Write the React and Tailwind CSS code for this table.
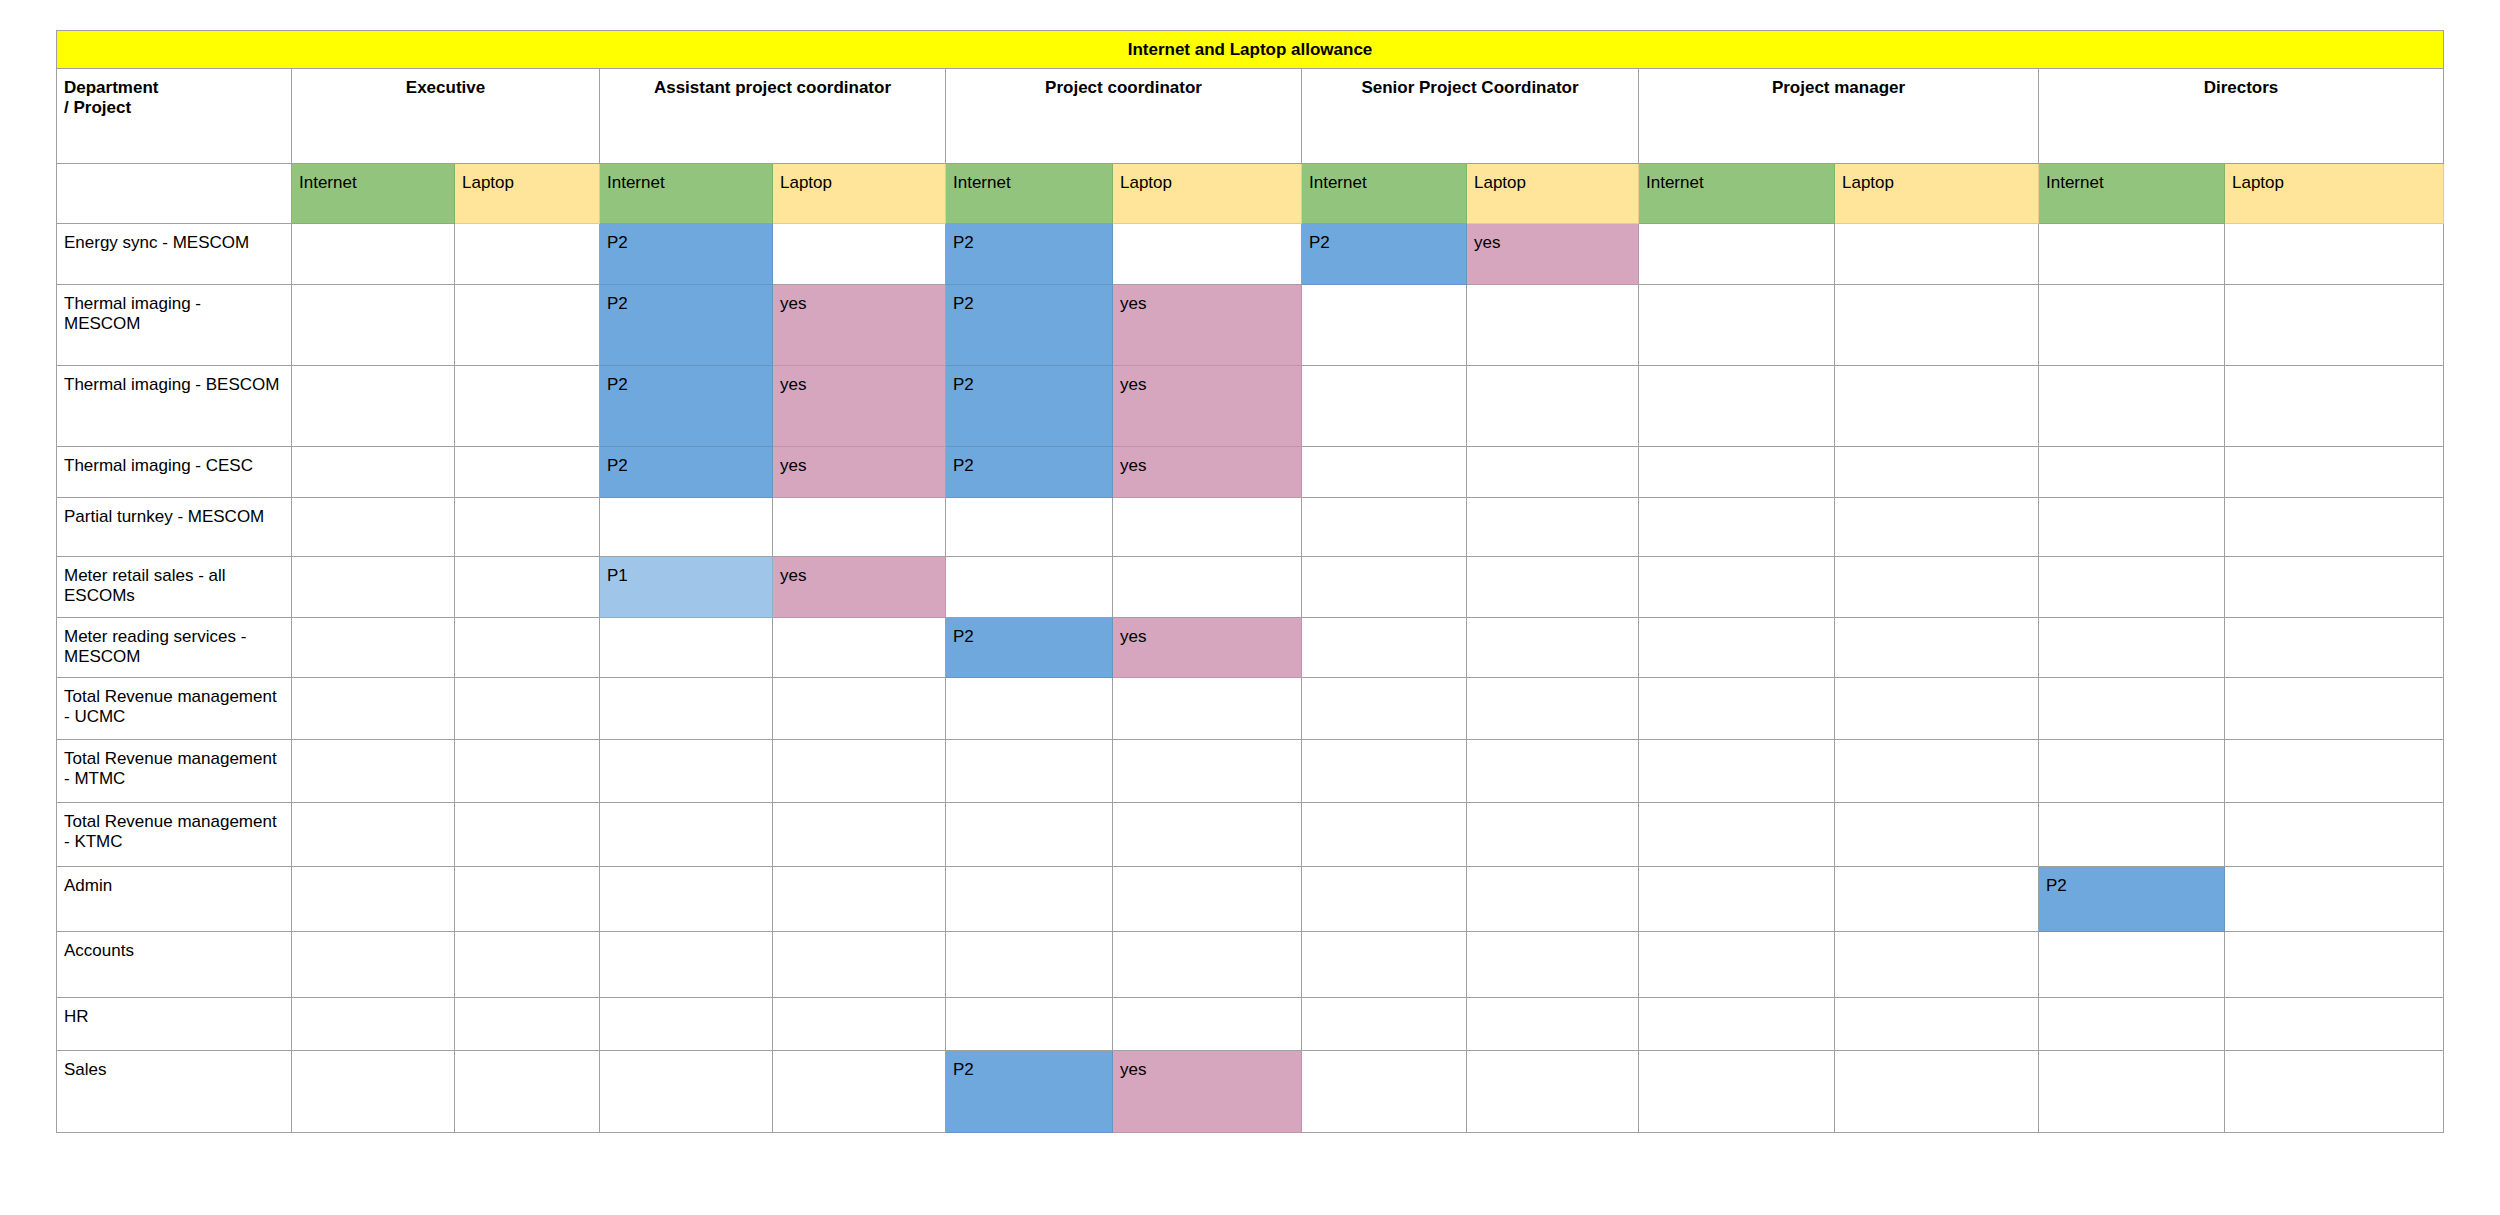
import React from 'react'

const roles = [
  'Executive',
  'Assistant project coordinator',
  'Project coordinator',
  'Senior Project Coordinator',
  'Project manager',
  'Directors',
]

// cell fills, keyed by value
const fills = {
  P2: 'bg-[#6fa8dc] border-black/10',
  P1: 'bg-[#9fc5e8] border-black/10',
  yes: 'bg-[#d5a6bd] border-black/10',
}

const thermal = { 3: 'P2', 4: 'yes', 5: 'P2', 6: 'yes' }

const rows = [
  { label: ['Energy sync - MESCOM'], cells: { 3: 'P2', 5: 'P2', 7: 'P2', 8: 'yes' } },
  { label: ['Thermal imaging -', 'MESCOM'], cells: thermal },
  { label: ['Thermal imaging - BESCOM'], cells: thermal },
  { label: ['Thermal imaging - CESC'], cells: thermal },
  { label: ['Partial turnkey - MESCOM'], cells: {} },
  { label: ['Meter retail sales - all', 'ESCOMs'], cells: { 3: 'P1', 4: 'yes' } },
  { label: ['Meter reading services -', 'MESCOM'], cells: { 5: 'P2', 6: 'yes' } },
  { label: ['Total Revenue management', '- UCMC'], cells: {} },
  { label: ['Total Revenue management', '- MTMC'], cells: {} },
  { label: ['Total Revenue management', '- KTMC'], cells: {} },
  { label: ['Admin'], cells: { 11: 'P2' } },
  { label: ['Accounts'], cells: {} },
  { label: ['HR'], cells: {} },
  { label: ['Sales'], cells: { 5: 'P2', 6: 'yes' } },
]

const Cell = ({ className = 'border-[#a0a0a0]', children }) => (
  <div className={`border-r border-b pl-[7px] pt-[9px] whitespace-nowrap ${className}`}>
    {children}
  </div>
)

const Lines = ({ lines }) =>
  lines.map((line, i) => (
    <React.Fragment key={i}>
      {i > 0 && <br />}
      {line}
    </React.Fragment>
  ))

const App = () => {
  return (
    <div className="min-h-[1215px] bg-white pt-[30px] pl-[56px] text-black font-['Liberation_Sans',Arial,sans-serif] text-[17px] leading-[19.5px]">
      <div className="w-fit grid grid-cols-[235px_163px_145px_173px_173px_167px_189px_165px_172px_196px_204px_186px_219px] grid-rows-[38px_95px_60px_61px_81px_81px_51px_59px_61px_60px_62px_63px_64px_65px_66px_53px_82px] border-l border-t border-[#a0a0a0]">
        <div className="col-span-13 flex items-center justify-center border-r border-b border-[#a0a0a0] bg-[#ffff00] font-bold">
          Internet and Laptop allowance
        </div>

        <Cell className="border-[#a0a0a0] font-bold">
          <Lines lines={['Department', '/ Project']} />
        </Cell>
        {roles.map((role) => (
          <div
            key={role}
            className="col-span-2 border-r border-b border-[#a0a0a0] pt-[9px] text-center font-bold whitespace-nowrap"
          >
            {role}
          </div>
        ))}

        <Cell />
        {roles.map((role) => (
          <React.Fragment key={role}>
            <Cell className="bg-[#93c47d] border-black/10">Internet</Cell>
            <Cell className="bg-[#ffe599] border-black/10">Laptop</Cell>
          </React.Fragment>
        ))}

        {rows.map((row, r) => (
          <React.Fragment key={r}>
            <Cell>
              <Lines lines={row.label} />
            </Cell>
            {Array.from({ length: 12 }, (_, i) => {
              const value = row.cells[i + 1]
              return value ? (
                <Cell key={i} className={fills[value]}>
                  {value}
                </Cell>
              ) : (
                <Cell key={i} />
              )
            })}
          </React.Fragment>
        ))}
      </div>
    </div>
  )
}

export default App
